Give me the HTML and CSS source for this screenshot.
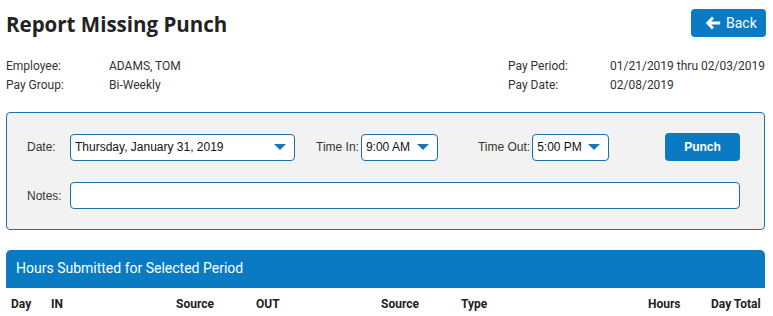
FILE: index.html
```html
<!DOCTYPE html>
<html lang="en">

<head>
    <meta charset="UTF-8">
    <meta name="viewport" content="width=device-width, initial-scale=1.0">
    <title>Report Missing Punch</title>
    <link rel="stylesheet" href="styles.css">
</head>

<body>
    <div class="pagina">
        <div class="topo">
            <h1>Report Missing Punch</h1>
            <button class="btn-back">
                <svg width="15" height="13" viewBox="0 0 15 13">
                    <path d="M6.5 0.5 L0.8 6.5 L6.5 12.5 L8.4 10.6 L5.7 7.9 L14.2 7.9 L14.2 5.1 L5.7 5.1 L8.4 2.4 Z" fill="#fff" />
                </svg>
                Back
            </button>
        </div>

        <div class="info">
            <span>Employee:</span>
            <span>ADAMS, TOM</span>
            <span>Pay Period:</span>
            <span>01/21/2019 thru 02/03/2019</span>
            <span>Pay Group:</span>
            <span>Bi-Weekly</span>
            <span>Pay Date:</span>
            <span>02/08/2019</span>
        </div>

        <div class="painel">
            <div class="linha">
                <label class="rotulo">Date:</label>
                <div class="select select-data">
                    <span>Thursday, January 31, 2019</span>
                    <i class="seta"></i>
                </div>
                <label class="rotulo-hora">Time In:</label>
                <div class="select select-hora">
                    <span>9:00 AM</span>
                    <i class="seta"></i>
                </div>
                <label class="rotulo-hora saida">Time Out:</label>
                <div class="select select-hora">
                    <span>5:00 PM</span>
                    <i class="seta"></i>
                </div>
                <button class="btn-punch">Punch</button>
            </div>
            <div class="linha">
                <label class="rotulo">Notes:</label>
                <input type="text" class="notas">
            </div>
        </div>

        <div class="barra">Hours Submitted for Selected Period</div>
        <table class="tabela">
            <colgroup>
                <col style="width: 40px">
                <col style="width: 125px">
                <col style="width: 80px">
                <col style="width: 125px">
                <col style="width: 80px">
                <col style="width: 187px">
                <col style="width: 63px">
                <col>
            </colgroup>
            <thead>
                <tr>
                    <th>Day</th>
                    <th>IN</th>
                    <th>Source</th>
                    <th>OUT</th>
                    <th>Source</th>
                    <th>Type</th>
                    <th>Hours</th>
                    <th>Day Total</th>
                </tr>
            </thead>
        </table>
    </div>
</body>

</html>
```

FILE: styles.css
```css
body {
    margin: 0;
    font-family: Roboto, sans-serif;
    font-size: 12px;
    color: #333;
    background-color: #fff;
}

.pagina {
    padding: 0 8px 0 6px;
}

.topo {
    display: flex;
    justify-content: space-between;
    align-items: flex-start;
    padding-top: 9px;
    height: 48px;
    box-sizing: border-box;
}

h1 {
    margin: 0;
    padding-top: 2px;
    font-family: 'Open Sans', sans-serif;
    font-size: 20.5px;
    font-weight: bold;
    color: #222;
    line-height: 26px;
}

.btn-back {
    display: flex;
    align-items: center;
    gap: 5px;
    width: 75px;
    height: 28px;
    padding: 0 0 0 14px;
    margin-right: -1px;
    border: none;
    border-radius: 4px;
    background-color: #0a7bc2;
    color: #fff;
    font-family: Roboto, sans-serif;
    font-size: 14px;
    cursor: pointer;
}

.btn-back svg {
    width: 16px;
    height: 14px;
}

.info {
    display: grid;
    grid-template-columns: 103px 399px 102px 1fr;
    line-height: 19px;
    padding-top: 9px;
    color: #333;
}

.painel {
    margin-top: 17px;
    background-color: #f2f2f2;
    border: 1px solid #1a73b0;
    border-radius: 4px;
    padding: 20px 24px 20px 20px;
    display: flex;
    flex-direction: column;
    gap: 21px;
    font-family: 'Liberation Sans', Arial, sans-serif;
}

.linha {
    display: flex;
    align-items: center;
}

.rotulo {
    width: 43px;
    color: #333;
}

.rotulo-hora {
    margin-left: 21px;
    margin-right: 2px;
    color: #333;
}

.rotulo-hora.saida {
    margin-left: 40px;
}

.select {
    display: flex;
    align-items: center;
    justify-content: space-between;
    height: 27px;
    box-sizing: border-box;
    padding: 0 8px 0 4px;
    background-color: #fff;
    border: 1px solid #1a6fa9;
    border-radius: 4px;
    color: #111;
}

.select-data {
    width: 225px;
}

.select-hora {
    width: 77px;
}

.seta {
    width: 0;
    height: 0;
    border-left: 6px solid transparent;
    border-right: 6px solid transparent;
    border-top: 6px solid #1a73b5;
}

.btn-punch {
    margin-left: auto;
    width: 75px;
    height: 28px;
    border: none;
    border-radius: 4px;
    background-color: #0a7bc2;
    color: #fff;
    font-family: 'Liberation Sans', Arial, sans-serif;
    font-size: 12px;
    font-weight: bold;
    cursor: pointer;
}

.notas {
    flex: 1;
    height: 27px;
    box-sizing: border-box;
    border: 1px solid #1a6fa9;
    border-radius: 4px;
    background-color: #fff;
    outline: none;
}

.barra {
    margin-top: 20px;
    height: 38px;
    line-height: 36px;
    padding-left: 10px;
    background-color: #0a7bc2;
    color: #fff;
    font-size: 14px;
    border-top-left-radius: 5px;
    border-top-right-radius: 5px;
}

.tabela {
    width: 100%;
    table-layout: fixed;
    border-collapse: collapse;
}

.tabela th {
    text-align: left;
    padding: 0 0 0 5px;
    height: 31px;
    font-size: 12px;
    font-weight: bold;
    color: #222;
    white-space: nowrap;
}
```
